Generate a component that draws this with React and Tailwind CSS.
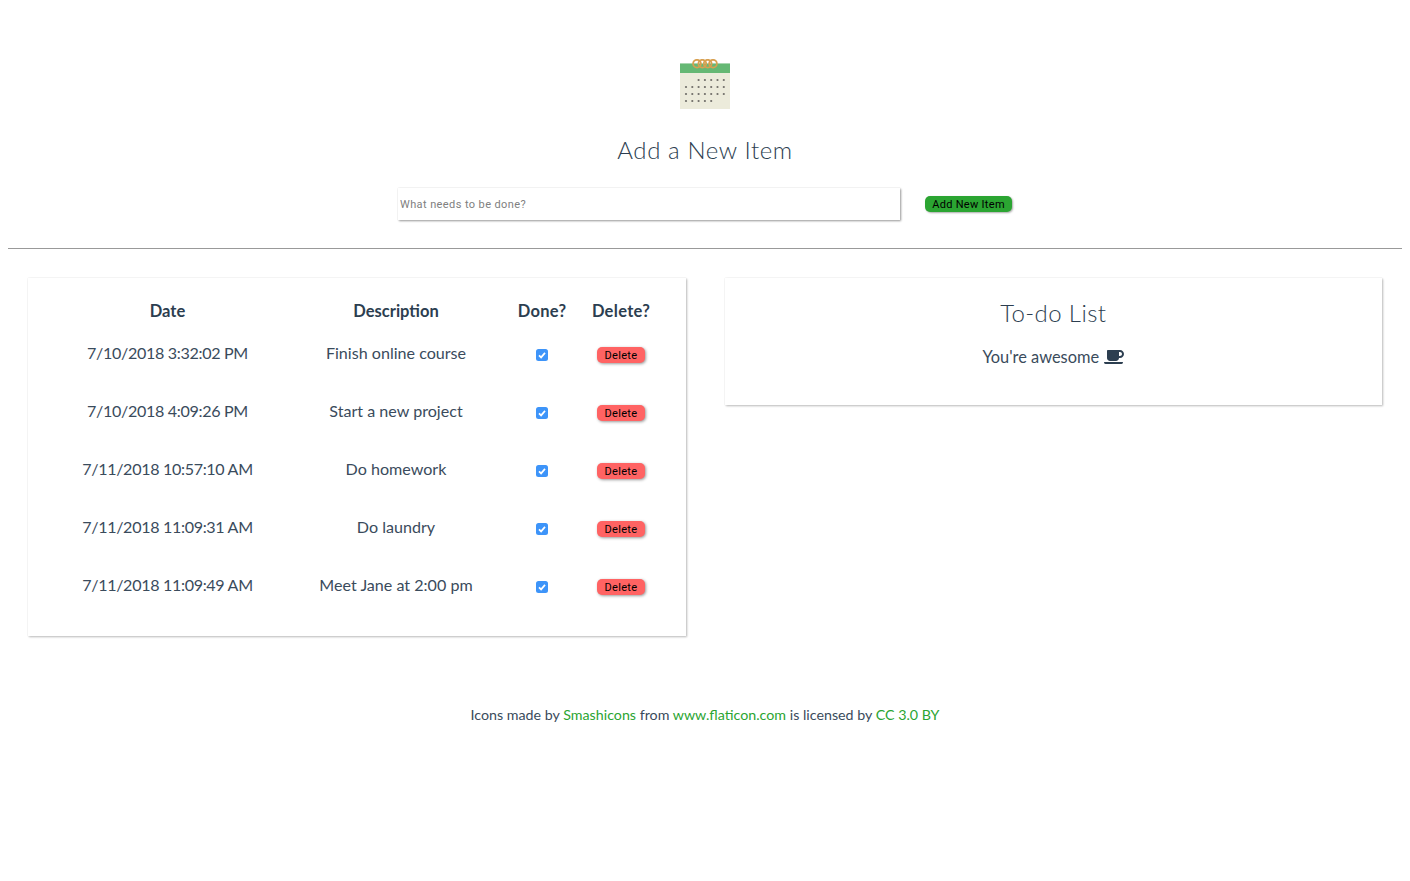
import { FaCoffee } from 'react-icons/fa'

const todos = [
  { date: '7/10/2018 3:32:02 PM', text: 'Finish online course' },
  { date: '7/10/2018 4:09:26 PM', text: 'Start a new project' },
  { date: '7/11/2018 10:57:10 AM', text: 'Do homework' },
  { date: '7/11/2018 11:09:31 AM', text: 'Do laundry' },
  { date: '7/11/2018 11:09:49 AM', text: 'Meet Jane at 2:00 pm' },
]

const dotRows = [
  { y: 21, cols: [2, 3, 4, 5, 6] },
  { y: 28, cols: [0, 1, 2, 3, 4, 5, 6] },
  { y: 35, cols: [0, 1, 2, 3, 4, 5, 6] },
  { y: 42, cols: [0, 1, 2, 3, 4] },
]

function CalendarIcon() {
  return (
    <svg width="50" height="50" viewBox="0 0 50 50" className="block">
      <rect x="0" y="4" width="50" height="46" fill="#ecebdb" />
      <rect x="0" y="4" width="50" height="10" fill="#65b874" />
      <rect x="0" y="4" width="50" height="1" fill="#a9d6b0" />
      {[17, 22.3, 27.7, 33].map(cx => (
        <circle key={cx} cx={cx} cy="4.7" r="3.9" fill="none" stroke="#d8a050" strokeWidth="1.8" />
      ))}
      {dotRows.map(row =>
        row.cols.map(col => (
          <circle key={`${row.y}-${col}`} cx={6 + col * 6.3} cy={row.y} r="1.1" fill="#6f6d68" />
        ))
      )}
    </svg>
  )
}

function CheckedBox() {
  return (
    <svg width="12" height="12" viewBox="0 0 12 12" role="checkbox" aria-checked="true" className="mx-auto block">
      <rect width="12" height="12" rx="2.5" fill="#3d94f9" />
      <path d="M3 6.3l2.1 2.1L9 3.9" fill="none" stroke="#fff" strokeWidth="1.7" />
    </svg>
  )
}

export default function App() {
  return (
    <div className="min-h-screen bg-white p-2 font-['Lato',sans-serif] text-[#2c3e50]">
      <div className="flex flex-col items-center pt-[51px]">
        <CalendarIcon />
        <h1 className="mt-6 text-2xl leading-[34px] font-light tracking-[0.6px]">Add a New Item</h1>
        <div className="mt-[21px] flex items-center">
          <input
            type="text"
            placeholder="What needs to be done?"
            className="h-8 w-[502px] bg-white px-0.5 font-['Roboto',sans-serif] text-[11px] tracking-[0.4px] shadow-[1px_1px_2px_#999,0_0_1px_#ddd] outline-none placeholder:text-[#808080]"
          />
          <button className="ml-[25px] h-4 w-[87px] rounded-[5px] bg-[#2ba532] font-['Roboto',sans-serif] text-[11px] leading-[17px] tracking-[0.3px] text-black shadow-[1px_1px_2px_#aaa]">
            Add New Item
          </button>
        </div>
      </div>

      <hr className="mt-7 border-t border-[#999]" />

      <div className="mt-[29px] grid grid-cols-2 gap-[39px] px-5">
        <div className="h-[358px] bg-white pt-5 pl-5 shadow-[1px_1px_2px_#bbb,0_0_1px_#ddd]">
          <table className="w-[615px] table-fixed border-collapse text-center">
            <thead>
              <tr className="h-7 text-[16.5px]">
                <th className="w-[239px] pb-0.5 font-bold">Date</th>
                <th className="w-[218px] pb-0.5 font-bold">Description</th>
                <th className="w-[74px] pb-0.5 font-bold tracking-[0.3px]">Done?</th>
                <th className="w-[84px] pb-0.5 font-bold tracking-[0.3px]">Delete?</th>
              </tr>
            </thead>
            <tbody>
              {todos.map(todo => (
                <tr key={todo.date} className="h-[58px] text-[16.1px] text-[#3a4b5c]">
                  <td className="pb-1 tracking-[-0.33px]">{todo.date}</td>
                  <td className="pb-1">{todo.text}</td>
                  <td>
                    <CheckedBox />
                  </td>
                  <td>
                    <button className="mx-auto block h-4 w-12 rounded-[5px] bg-[#ff6363] font-['Roboto',sans-serif] text-[11px] leading-[17px] tracking-[0.3px] text-black shadow-[1px_1px_3px_#999]">
                      Delete
                    </button>
                  </td>
                </tr>
              ))}
            </tbody>
          </table>
        </div>

        <div className="h-[127px] self-start bg-white pt-[19px] text-center shadow-[1px_1px_2px_#bbb,0_0_1px_#ddd]">
          <h2 className="text-2xl leading-8 font-light tracking-[0.4px]">To-do List</h2>
          <p className="mt-4 flex items-center justify-center gap-[5px] text-[16.4px] leading-6 text-[#3a4b5c]">
            You're awesome <FaCoffee className="text-xl text-[#2c3e50]" />
          </p>
        </div>
      </div>

      <p className="mt-[69px] text-center text-[14.25px] leading-5 text-[#3a4b5c]">
        Icons made by <a className="text-[#2ba532]">Smashicons</a> from{' '}
        <a className="text-[#2ba532]">www.flaticon.com</a> is licensed by{' '}
        <a className="text-[#2ba532]">CC 3.0 BY</a>
      </p>
    </div>
  )
}
